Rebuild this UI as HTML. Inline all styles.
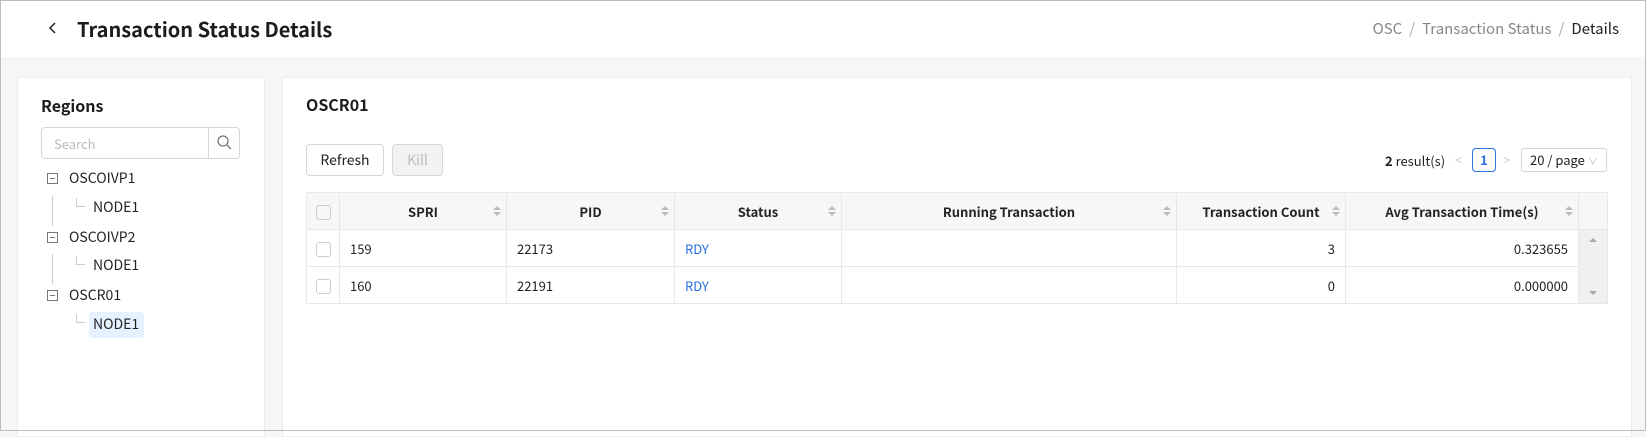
<!DOCTYPE html>
<html><head><meta charset="utf-8"><style>
*{box-sizing:border-box;margin:0;padding:0}
body{width:1646px;height:431px;overflow:hidden;background:#f5f6f8;font-family:"Noto Sans CJK KR","Liberation Sans",sans-serif;color:#222;position:relative}
.frame{position:absolute;left:0;top:0;width:1646px;height:431px;border:1px solid #bdbdbd;pointer-events:none;z-index:10}
.hdr{position:absolute;left:0;top:0;width:1646px;height:57px;background:#fff}
.title{position:absolute;left:77px;top:14px;font-size:20px;font-weight:700;color:#1c1c1c}
.back{position:absolute;left:46px;top:17px}
.bc{position:absolute;right:27px;top:18px;font-size:15px;color:#888}
.bc b{font-weight:400;color:#222}
.bc span{margin:0 7px;color:#aaa}
.lp{position:absolute;left:17px;top:77px;width:248px;height:360px;background:#fff;border:1px solid #ececec}
.rp{position:absolute;left:282px;top:77px;width:1350px;height:360px;background:#fff;border:1px solid #ececec}
.h2{position:absolute;font-size:16px;font-weight:700;color:#1c1c1c}
.search{position:absolute;left:41px;top:127px;width:199px;height:32px;border:1px solid #d6d6d6;border-radius:4px}
.search .ph{position:absolute;left:12px;top:6px;font-size:13px;color:#bbb}
.search .btn{position:absolute;right:0;top:0;width:31px;height:30px;border-left:1px solid #d6d6d6}
.ti{position:absolute;font-size:14px;color:#222}
.mi{position:absolute;width:11px;height:11px;border:1px solid #777;left:47px}
.mi:after{content:"";position:absolute;left:2px;top:4px;width:5px;height:1px;background:#777}
.vl{position:absolute;left:52px;width:1px;background:#ccc}
.el{position:absolute;left:76px;width:9px;height:9px;border-left:1px solid #ccc;border-bottom:1px solid #ccc}
.b{position:absolute;top:144px;height:32px;border:1px solid #d6d6d6;border-radius:4px;font-size:14px;text-align:center;line-height:30px}
table{position:absolute;left:306px;top:192px;border-collapse:collapse;font-size:13px}
td,th{border:1px solid #e8e8e8;height:37px;padding:0 10px}
th{background:#f7f7f7;font-weight:700;height:37px;position:relative}
th .s{position:absolute;right:9px;top:14px;width:0;height:0}
.s:before{content:"";position:absolute;left:-4px;top:-1px;border:4px solid transparent;border-bottom:4px solid #bbb;border-top:0}
.s:after{content:"";position:absolute;left:-4px;top:5px;border:4px solid transparent;border-top:4px solid #bbb;border-bottom:0}
.cb{display:inline-block;width:15px;height:15px;border:1px solid #ccc;border-radius:3px;vertical-align:middle}
.r{text-align:right}
.blue{color:#2a70e0}
</style></head><body>
<div class="hdr"></div>
<svg class="back" width="14" height="22" viewBox="0 0 14 22"><path d="M9 6 L4 11 L9 16" stroke="#222" stroke-width="1.5" fill="none"/></svg>
<div class="title">Transaction Status Details</div>
<div class="bc">OSC<span>/</span>Transaction Status<span>/</span><b>Details</b></div>
<div class="lp"></div>
<div class="rp"></div>
<div class="h2" style="left:41px;top:93px">Regions</div>
<div class="search"><div class="ph">Search</div><div class="btn"><svg width="31" height="30" viewBox="0 0 31 30"><circle cx="14" cy="13" r="5" stroke="#777" stroke-width="1.3" fill="none"/><path d="M18 17 L22 21" stroke="#777" stroke-width="1.3"/></svg></div></div>
<div class="mi" style="top:173px"></div><div class="ti" style="left:69px;top:168px">OSCOIVP1</div>
<div class="vl" style="top:196px;height:30px"></div><div class="el" style="top:198px"></div><div class="ti" style="left:93px;top:197px">NODE1</div>
<div class="mi" style="top:232px"></div><div class="ti" style="left:69px;top:227px">OSCOIVP2</div>
<div class="vl" style="top:254px;height:30px"></div><div class="el" style="top:256px"></div><div class="ti" style="left:93px;top:255px">NODE1</div>
<div class="mi" style="top:290px"></div><div class="ti" style="left:69px;top:285px">OSCR01</div>
<div class="el" style="top:314px"></div><div style="position:absolute;left:89px;top:312px;width:55px;height:26px;background:#e6f2ff;border-radius:3px"></div><div class="ti" style="left:93px;top:314px">NODE1</div>
<div class="h2" style="left:306px;top:92px">OSCR01</div>
<div class="b" style="left:306px;width:78px">Refresh</div>
<div class="b" style="left:392px;width:51px;background:#f2f2f2;color:#bbb">Kill</div>
<div style="position:absolute;left:1385px;top:151px;font-size:13px"><b>2</b> result(s)</div>
<div style="position:absolute;left:1455px;top:150px;font-size:13px;color:#ccc">&lt;</div>
<div style="position:absolute;left:1472px;top:148px;width:24px;height:24px;border:1px solid #2a70e0;border-radius:4px;color:#2a70e0;font-size:13px;font-weight:700;text-align:center;line-height:22px">1</div>
<div style="position:absolute;left:1503px;top:150px;font-size:13px;color:#ccc">&gt;</div>
<div style="position:absolute;left:1521px;top:148px;width:86px;height:24px;border:1px solid #d6d6d6;border-radius:3px;font-size:13px;line-height:22px;padding-left:8px">20 / page <span style="color:#bbb;font-size:10px">&#8744;</span></div>
<table>
<tr><th style="width:33px;padding:0"><span class="cb"></span></th><th style="width:167px">SPRI<span class="s"></span></th><th style="width:168px">PID<span class="s"></span></th><th style="width:167px">Status<span class="s"></span></th><th style="width:335px">Running Transaction<span class="s"></span></th><th style="width:169px">Transaction Count<span class="s"></span></th><th style="width:233px">Avg Transaction Time(s)<span class="s"></span></th><th style="width:29px;background:#f7f7f7"></th></tr>
<tr><td style="padding:0;text-align:center"><span class="cb"></span></td><td>159</td><td>22173</td><td class="blue">RDY</td><td></td><td class="r">3</td><td class="r">0.323655</td><td rowspan="2" style="background:#f0f0f0;padding:0;position:relative"><div style="position:absolute;top:8px;left:10px;border:4px solid transparent;border-bottom:4px solid #aaa;border-top:0"></div><div style="position:absolute;bottom:8px;left:10px;border:4px solid transparent;border-top:4px solid #aaa;border-bottom:0"></div></td></tr>
<tr><td style="padding:0;text-align:center"><span class="cb"></span></td><td>160</td><td>22191</td><td class="blue">RDY</td><td></td><td class="r">0</td><td class="r">0.000000</td></tr>
</table>
<div class="frame"></div>
</body></html>
